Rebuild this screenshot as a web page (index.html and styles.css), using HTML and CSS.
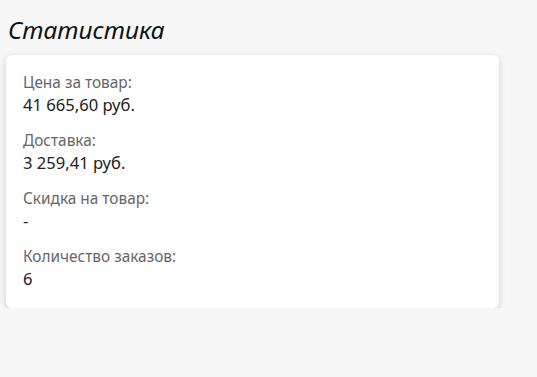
FILE: index.html
```html
<!DOCTYPE html>
<html lang="ru">

<head>
    <meta charset="UTF-8">
    <meta name="viewport" content="width=device-width, initial-scale=1.0">
    <title>Статистика</title>
    <link rel="stylesheet" href="styles.css">
</head>

<body>
    <div class="page">
        <h1 class="title">Статистика</h1>
        <div class="card">
            <div class="stat">
                <div class="stat-label">Цена за товар:</div>
                <div class="stat-value">41 665,60 руб.</div>
            </div>
            <div class="stat">
                <div class="stat-label">Доставка:</div>
                <div class="stat-value">3 259,41 руб.</div>
            </div>
            <div class="stat">
                <div class="stat-label">Скидка на товар:</div>
                <div class="stat-value">-</div>
            </div>
            <div class="stat">
                <div class="stat-label">Количество заказов:</div>
                <div class="stat-value">6</div>
            </div>
        </div>
    </div>
</body>

</html>
```

FILE: styles.css
```css
body {
    margin: 0;
    background-color: #f7f7f7;
    font-family: 'Noto Sans', 'Open Sans', sans-serif;
    color: #222;
}

.page {
    padding: 14px 0 0 6px;
    width: 493px;
}

.title {
    margin: 0 0 9px 2px;
    font-size: 24.5px;
    font-weight: normal;
    font-style: italic;
    line-height: 32px;
    color: #111;
}

.card {
    background-color: #fff;
    border-radius: 6px;
    box-shadow: 0 2px 7px rgba(0, 0, 0, 0.16);
    padding: 18px 17px 17px;
    display: flex;
    flex-direction: column;
    gap: 14px;
}

.stat-label {
    font-size: 15.4px;
    line-height: 20px;
    color: #666;
}

.stat-value {
    font-size: 16.6px;
    line-height: 24px;
    color: #222;
}
```
